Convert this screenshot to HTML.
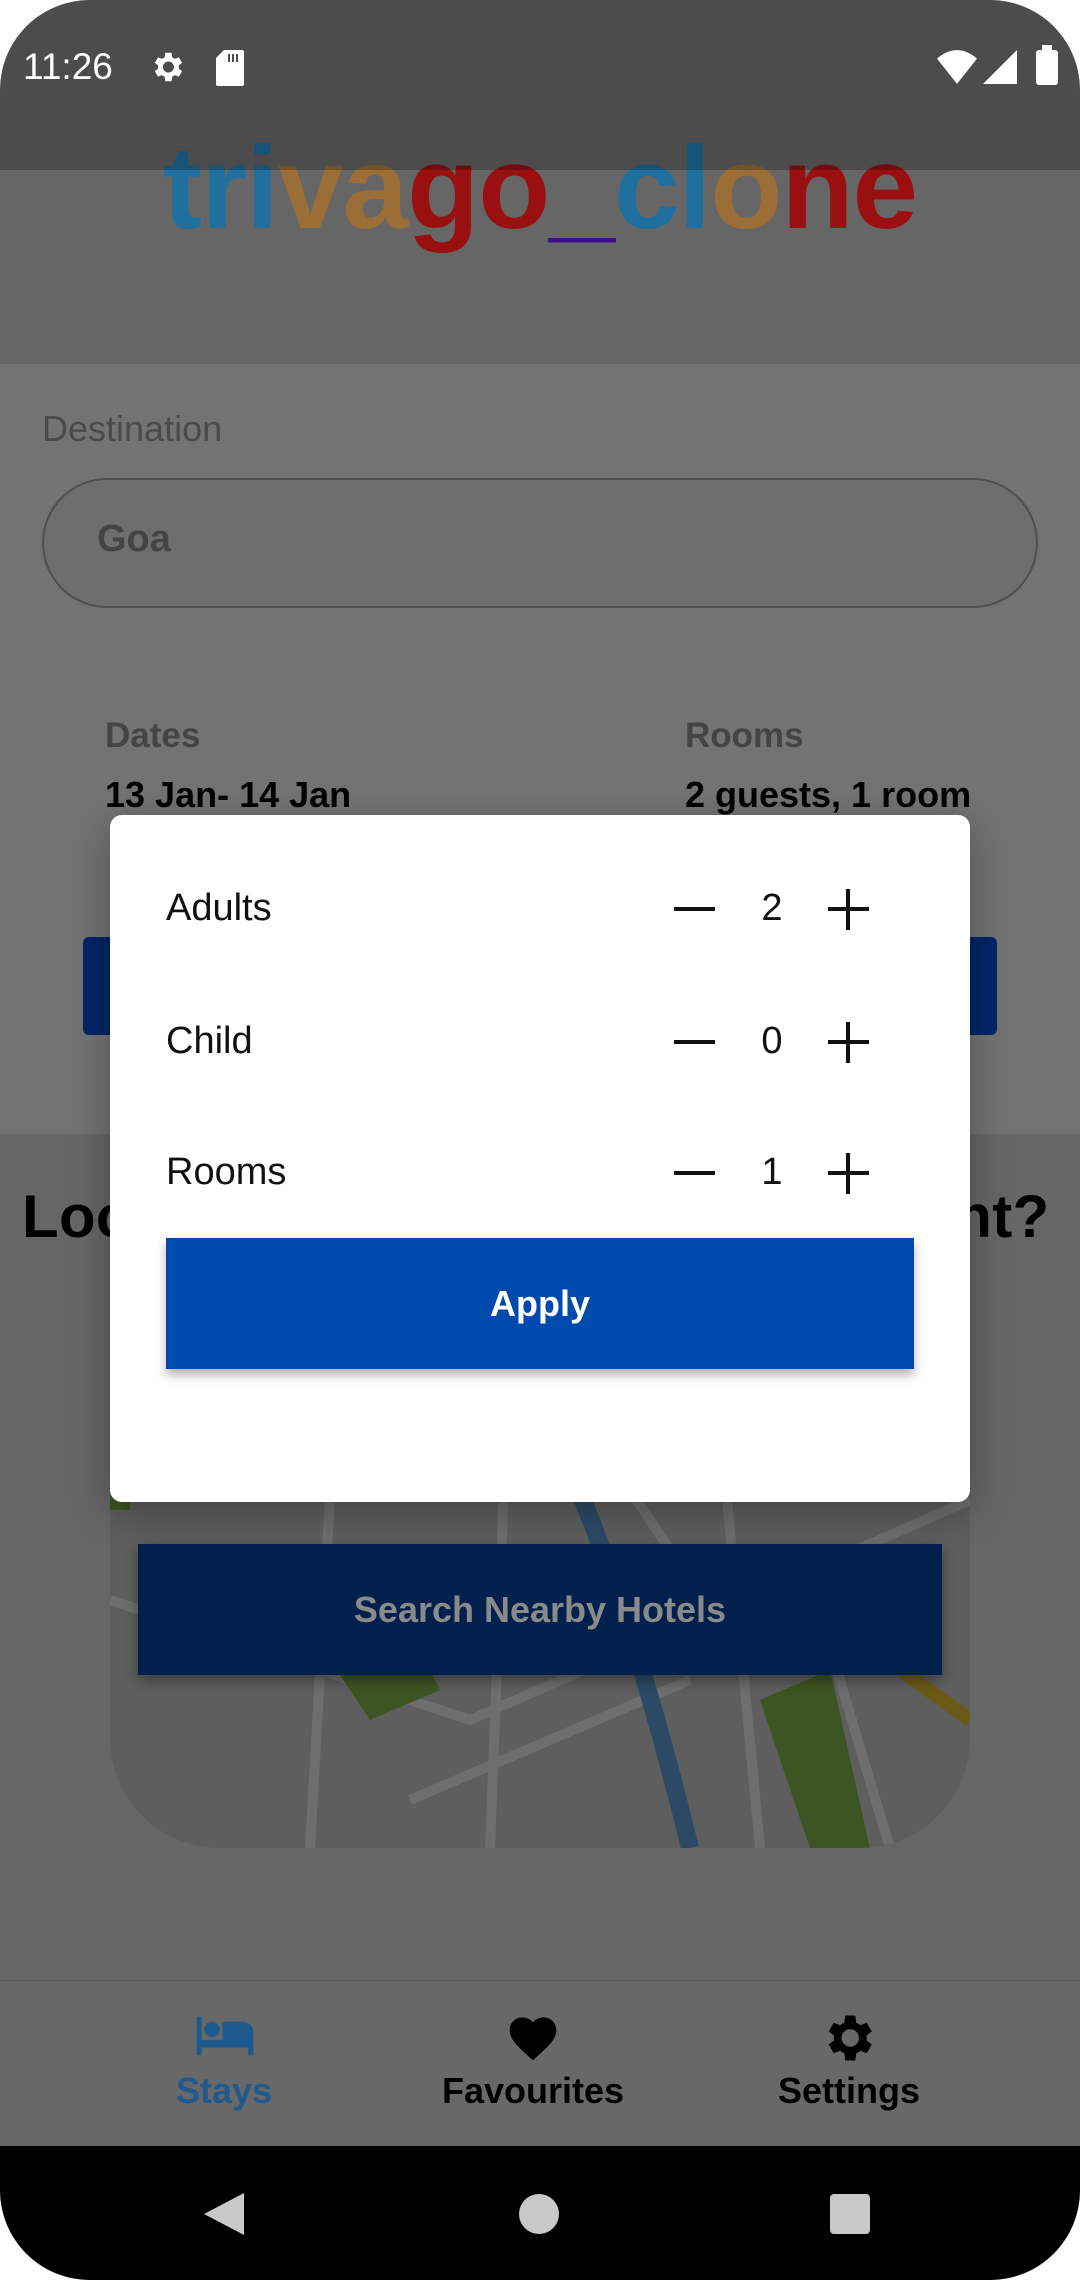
<!DOCTYPE html>
<html><head><meta charset="utf-8"><style>
*{margin:0;padding:0;box-sizing:border-box}
body{width:1080px;height:2280px;position:relative;overflow:hidden;background:#fff;font-family:"Liberation Sans",Roboto,sans-serif}
.abs{position:absolute}
#screen{position:absolute;left:0;top:0;width:1080px;height:2280px;border-radius:90px;overflow:hidden;background:#666}
</style></head><body>
<div id="screen">
  <div class="abs" style="left:0;top:170px;width:1080px;height:194px;background:#666"></div>
  <div class="abs" style="left:0;top:364px;width:1080px;height:770px;background:#737373"></div>
  <!-- logo -->
  <div class="abs" style="left:0;top:118px;width:1080px;text-align:center;font-size:118px;font-weight:bold;letter-spacing:-1px;line-height:140px">
    <span style="color:#1f6f9f">tri</span><span style="color:#9a6e36">va</span><span style="color:#9a1010">go</span><span style="color:#3a0c8e">_</span><span style="color:#1f6f9f">cl</span><span style="color:#9a6e36">o</span><span style="color:#9a1010">ne</span>
  </div>
  <div class="abs" style="left:0;top:0;width:1080px;height:170px;background:rgba(0,0,0,.25)"></div>
  <!-- status bar -->
  <div class="abs" style="left:23px;top:46px;color:#fff;font-size:37px">11:26</div>
  <svg class="abs" style="left:148px;top:48px" width="38" height="38" viewBox="0 0 24 24"><path fill="#fff" d="M19.4 13a7.5 7.5 0 000-2l2.1-1.6-2-3.5-2.5 1a7 7 0 00-1.7-1L14.9 3h-4l-.4 2.9a7 7 0 00-1.7 1l-2.5-1-2 3.5L6.4 11a7.5 7.5 0 000 2l-2.1 1.6 2 3.5 2.5-1a7 7 0 001.7 1l.4 2.9h4l.4-2.9a7 7 0 001.7-1l2.5 1 2-3.5zM12.9 15.5a3.5 3.5 0 110-7 3.5 3.5 0 010 7z"/></svg>
  <svg class="abs" style="left:215px;top:50px" width="30" height="36" viewBox="0 0 14 18"><path fill="#fff" d="M4 0h9a1 1 0 011 1v16a1 1 0 01-1 1H1a1 1 0 01-1-1V4z"/><path fill="#4d4d4d" d="M6 2h1v4H6zM8 2h1v4H8zM10 2h1v4h-1z"/></svg>
  <svg class="abs" style="left:937px;top:50px" width="40" height="34" viewBox="0 0 38 32"><path fill="#fff" d="M19 32L0 8Q19-8 38 8z"/></svg>
  <svg class="abs" style="left:983px;top:50px" width="34" height="34" viewBox="0 0 32 32"><path fill="#fff" d="M0 32L32 0v32z"/></svg>
  <div class="abs" style="left:1036px;top:50px;width:22px;height:35px;background:#fff;border-radius:3px"></div>
  <div class="abs" style="left:1042px;top:45px;width:10px;height:6px;background:#fff"></div>

  <!-- form -->
  <div class="abs" style="left:42px;top:408px;color:#4a4a4a;font-size:36px">Destination</div>
  <div class="abs" style="left:42px;top:478px;width:996px;height:130px;border:2px solid #4f4f4f;border-radius:65px;background:#6e6e6e"></div>
  <div class="abs" style="left:97px;top:518px;color:#444;font-size:38px;font-weight:bold">Goa</div>
  <div class="abs" style="left:105px;top:716px;color:#444;font-size:35px;font-weight:bold">Dates</div>
  <div class="abs" style="left:105px;top:774px;color:#000;font-size:36px;font-weight:bold">13 Jan- 14 Jan</div>
  <div class="abs" style="left:685px;top:716px;color:#444;font-size:35px;font-weight:bold">Rooms</div>
  <div class="abs" style="left:685px;top:774px;color:#000;font-size:36px;font-weight:bold">2 guests, 1 room</div>
  <div class="abs" style="left:83px;top:937px;width:914px;height:98px;background:#002566;border-radius:6px"></div>

  <div class="abs" style="left:22px;top:1182px;color:#000;font-size:60px;font-weight:bold;white-space:nowrap;letter-spacing:0.3px">Looking for a place to stay tonight?</div>

  <!-- map -->
  <div class="abs" style="left:110px;top:1300px;width:860px;height:548px;border-radius:0 0 110px 110px;overflow:hidden;background:#5e5e5e">
    <svg width="860" height="548" viewBox="0 0 860 548">
      <g stroke="#6e6e6e" stroke-width="10" fill="none">
        <path d="M0 300L360 420L860 200"/><path d="M230 20L200 548"/><path d="M400 30L380 548"/><path d="M600 20L650 548"/><path d="M700 280L780 548"/><path d="M0 160L860 120"/><path d="M500 160L620 340"/><path d="M300 500L580 380"/>
      </g>
      <path d="M0 130L30 90L20 210L0 210z" fill="#3d5522"/>
      <path d="M220 360L300 330L330 390L260 420z" fill="#3d5522"/>
      <path d="M650 400L720 370L760 548L700 548z" fill="#3d5522"/>
      <path d="M350 0Q470 100 580 548" stroke="#2c4a66" stroke-width="18" fill="none"/>
      <path d="M440 0L470 100M640 260L860 420" stroke="#6b5a16" stroke-width="14" fill="none"/>
    </svg>
  </div>
  <div class="abs" style="left:138px;top:1544px;width:804px;height:131px;background:#00204d;box-shadow:0 6px 12px rgba(0,0,0,.35);color:#8a8a8a;font-size:36px;font-weight:bold;text-align:center;line-height:131px">Search Nearby Hotels</div>

  <!-- bottom nav -->
  <div class="abs" style="left:0;top:1980px;width:1080px;height:166px;background:#686868;border-top:1px solid #5a5a5a"></div>
  <svg class="abs" style="left:194px;top:2014px" width="62" height="44" viewBox="0 0 24 17"><path fill="#1f5a8c" d="M7 9a3 3 0 100-6 3 3 0 000 6zm12-6h-8v7H3V1H1v15h2v-3h18v3h2V7a4 4 0 00-4-4z"/></svg>
  <div class="abs" style="left:124px;top:2070px;width:200px;text-align:center;color:#1f5a8c;font-size:36px;font-weight:bold">Stays</div>
  <svg class="abs" style="left:505px;top:2010px" width="56" height="52" viewBox="0 0 24 22"><path fill="#000" d="M12 21.4l-1.5-1.3C5.4 15.4 2 12.3 2 8.5 2 5.4 4.4 3 7.5 3c1.7 0 3.4.8 4.5 2.1C13.1 3.8 14.8 3 16.5 3 19.6 3 22 5.4 22 8.5c0 3.8-3.4 6.9-8.5 11.5z"/></svg>
  <div class="abs" style="left:383px;top:2070px;width:300px;text-align:center;color:#000;font-size:36px;font-weight:bold">Favourites</div>
  <svg class="abs" style="left:818px;top:2008px" width="60" height="60" viewBox="0 0 24 24"><path fill="#000" d="M19.4 13a7.5 7.5 0 000-2l2.1-1.6-2-3.5-2.5 1a7 7 0 00-1.7-1L14.9 3h-4l-.4 2.9a7 7 0 00-1.7 1l-2.5-1-2 3.5L6.4 11a7.5 7.5 0 000 2l-2.1 1.6 2 3.5 2.5-1a7 7 0 001.7 1l.4 2.9h4l.4-2.9a7 7 0 001.7-1l2.5 1 2-3.5zM12.9 15.5a3.5 3.5 0 110-7 3.5 3.5 0 010 7z"/></svg>
  <div class="abs" style="left:699px;top:2070px;width:300px;text-align:center;color:#000;font-size:36px;font-weight:bold">Settings</div>

  <!-- nav bar -->
  <div class="abs" style="left:0;top:2146px;width:1080px;height:134px;background:#000"></div>
  <svg class="abs" style="left:204px;top:2193px" width="40" height="42" viewBox="0 0 40 42"><path fill="#c8c8c8" d="M0 21L40 0v42z"/></svg>
  <div class="abs" style="left:519px;top:2194px;width:40px;height:40px;border-radius:50%;background:#c8c8c8"></div>
  <div class="abs" style="left:830px;top:2194px;width:40px;height:40px;border-radius:4px;background:#c8c8c8"></div>

  <!-- dialog -->
  <div class="abs" style="left:110px;top:815px;width:860px;height:687px;background:#fff;border-radius:12px;box-shadow:0 10px 40px rgba(0,0,0,.3)"></div>
  <div class="abs" style="left:166px;top:887px;font-size:38px;color:#111">Adults</div>
  <div class="abs" style="left:166px;top:1020px;font-size:38px;color:#111">Child</div>
  <div class="abs" style="left:166px;top:1151px;font-size:38px;color:#111">Rooms</div>
  <div class="abs" style="left:674px;top:907px;width:41px;height:4px;background:#111"></div>
  <div class="abs" style="left:674px;top:1040px;width:41px;height:4px;background:#111"></div>
  <div class="abs" style="left:674px;top:1171px;width:41px;height:4px;background:#111"></div>
  <div class="abs" style="left:752px;top:887px;width:40px;text-align:center;font-size:38px;color:#111">2</div>
  <div class="abs" style="left:752px;top:1020px;width:40px;text-align:center;font-size:38px;color:#111">0</div>
  <div class="abs" style="left:752px;top:1151px;width:40px;text-align:center;font-size:38px;color:#111">1</div>
  <div class="abs" style="left:828px;top:907px;width:41px;height:4px;background:#111"></div>
  <div class="abs" style="left:846px;top:889px;width:4px;height:41px;background:#111"></div>
  <div class="abs" style="left:828px;top:1040px;width:41px;height:4px;background:#111"></div>
  <div class="abs" style="left:846px;top:1022px;width:4px;height:41px;background:#111"></div>
  <div class="abs" style="left:828px;top:1171px;width:41px;height:4px;background:#111"></div>
  <div class="abs" style="left:846px;top:1153px;width:4px;height:41px;background:#111"></div>
  <div class="abs" style="left:166px;top:1238px;width:748px;height:131px;background:#004aad;box-shadow:0 6px 10px rgba(0,0,0,.3);color:#fff;font-size:36px;font-weight:bold;text-align:center;line-height:131px">Apply</div>
</div>
</body></html>
